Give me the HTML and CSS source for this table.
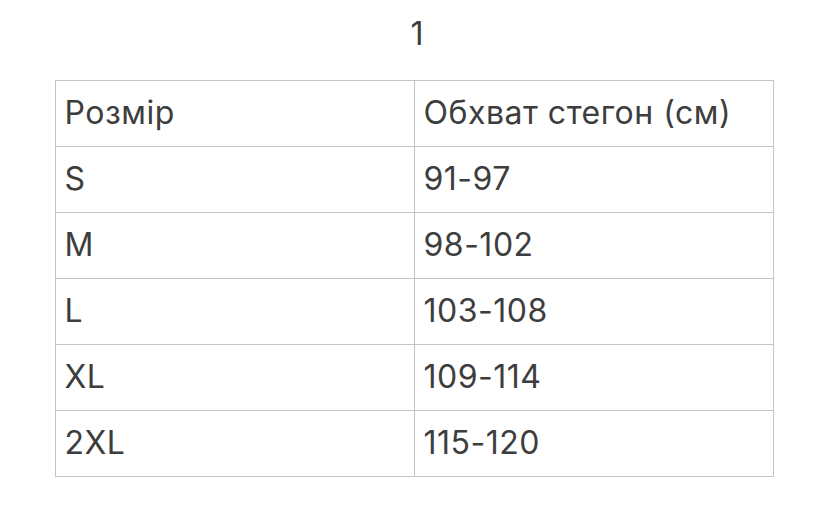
FILE: index.html
```html
<!DOCTYPE html>
<html lang="uk">
<head>
<meta charset="utf-8">
<link rel="stylesheet" href="styles.css">
</head>
<body>
<div class="page">
  <div class="title">1</div>
  <table class="sizes">
    <tr><td>Розмір</td><td>Обхват стегон (см)</td></tr>
    <tr><td>S</td><td>91-97</td></tr>
    <tr><td>M</td><td>98-102</td></tr>
    <tr><td>L</td><td>103-108</td></tr>
    <tr><td>XL</td><td>109-114</td></tr>
    <tr><td>2XL</td><td>115-120</td></tr>
  </table>
</div>
</body>
</html>
```
FILE: styles.css
```css
html, body {
  margin: 0;
  padding: 0;
  background: #fff;
}
body {
  font-family: "Inter", "Roboto", "Liberation Sans", sans-serif;
  color: #3d3d3d;
}
.page {
  width: 828px;
  height: 509px;
  display: flex;
  flex-direction: column;
  align-items: center;
  padding-top: 14px;
  box-sizing: border-box;
}
.title {
  font-size: 32px;
  line-height: 40px;
  height: 66px;
  padding-left: 6px;
}
.sizes {
  border-collapse: collapse;
  width: 719px;
  table-layout: fixed;
}
.sizes td {
  border: 1px solid #c4c4c4;
  height: 66px;
  padding: 0 9px 2px;
  font-size: 32px;
  letter-spacing: 0.5px;
  box-sizing: border-box;
  vertical-align: middle;
}
```
